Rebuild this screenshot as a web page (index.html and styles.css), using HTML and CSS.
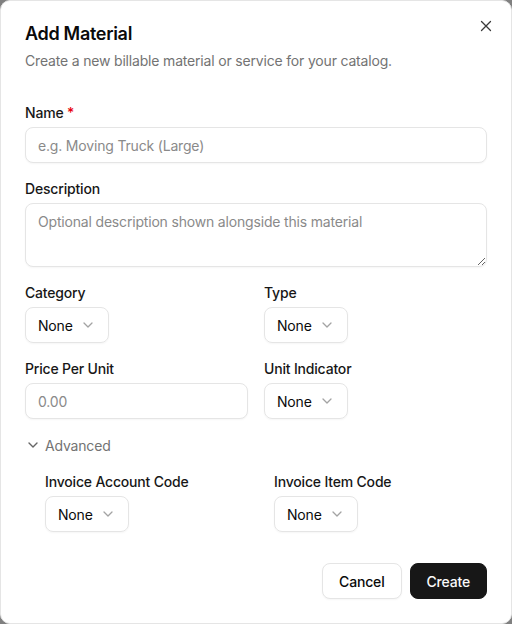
FILE: index.html
```html
<!DOCTYPE html>
<html lang="en">
<head>
<meta charset="utf-8">
<title>Add Material</title>
<link rel="stylesheet" href="styles.css">
</head>
<body>
<div class="dialog">
  <button class="close" aria-label="Close">
    <svg width="16" height="16" viewBox="0 0 16 16" fill="none" stroke="currentColor" stroke-width="1.3" stroke-linecap="round"><path d="M3.5 3.5L12.5 12.5M12.5 3.5L3.5 12.5"/></svg>
  </button>
  <div class="header">
    <h2 class="title">Add Material</h2>
    <p class="subtitle">Create a new billable material or service for your catalog.</p>
  </div>
  <form class="form">
    <div class="field">
      <label class="label">Name <span class="req">*</span></label>
      <input class="input" placeholder="e.g. Moving Truck (Large)">
    </div>
    <div class="field">
      <label class="label">Description</label>
      <textarea class="textarea" placeholder="Optional description shown alongside this material"></textarea>
    </div>
    <div class="row">
      <div class="field">
        <label class="label">Category</label>
        <div class="select"><span>None</span><svg class="chev" width="16" height="16" viewBox="0 0 16 16" fill="none" stroke="currentColor" stroke-width="1.3" stroke-linecap="round" stroke-linejoin="round"><path d="M4 6l4 4 4-4"/></svg></div>
      </div>
      <div class="field">
        <label class="label">Type</label>
        <div class="select"><span>None</span><svg class="chev" width="16" height="16" viewBox="0 0 16 16" fill="none" stroke="currentColor" stroke-width="1.3" stroke-linecap="round" stroke-linejoin="round"><path d="M4 6l4 4 4-4"/></svg></div>
      </div>
    </div>
    <div class="row">
      <div class="field">
        <label class="label">Price Per Unit</label>
        <input class="input" placeholder="0.00">
      </div>
      <div class="field">
        <label class="label">Unit Indicator</label>
        <div class="select"><span>None</span><svg class="chev" width="16" height="16" viewBox="0 0 16 16" fill="none" stroke="currentColor" stroke-width="1.3" stroke-linecap="round" stroke-linejoin="round"><path d="M4 6l4 4 4-4"/></svg></div>
      </div>
    </div>
    <div class="advanced">
      <svg class="adv-chev" width="16" height="16" viewBox="0 0 16 16" fill="none" stroke="currentColor" stroke-width="1.4" stroke-linecap="round" stroke-linejoin="round"><path d="M4 6l4 4 4-4"/></svg>
      <span>Advanced</span>
    </div>
    <div class="row adv-row">
      <div class="field">
        <label class="label">Invoice Account Code</label>
        <div class="select"><span>None</span><svg class="chev" width="16" height="16" viewBox="0 0 16 16" fill="none" stroke="currentColor" stroke-width="1.3" stroke-linecap="round" stroke-linejoin="round"><path d="M4 6l4 4 4-4"/></svg></div>
      </div>
      <div class="field">
        <label class="label">Invoice Item Code</label>
        <div class="select"><span>None</span><svg class="chev" width="16" height="16" viewBox="0 0 16 16" fill="none" stroke="currentColor" stroke-width="1.3" stroke-linecap="round" stroke-linejoin="round"><path d="M4 6l4 4 4-4"/></svg></div>
      </div>
    </div>
    <div class="footer">
      <button type="button" class="btn btn-outline">Cancel</button>
      <button type="button" class="btn btn-primary">Create</button>
    </div>
  </form>
</div>
</body>
</html>
```
FILE: styles.css
```css
* { box-sizing: border-box; }
html, body { margin: 0; padding: 0; }
body {
  background: #808080;
  font-family: "Inter", "Liberation Sans", sans-serif;
  color: #0a0a0a;
  width: 512px;
  height: 624px;
  overflow: hidden;
  letter-spacing: -0.18px;
}
.dialog {
  position: relative;
  width: 512px;
  height: 624px;
  background: #ffffff;
  border: 1px solid #e5e5e5;
  border-radius: 10px;
  padding: 24px;
}
.close {
  position: absolute;
  top: 17px;
  right: 17px;
  width: 16px;
  height: 16px;
  padding: 0;
  border: none;
  background: none;
  color: #3a3a3a;
  display: flex;
}
.header { display: flex; flex-direction: column; gap: 8px; }
.title {
  margin: 0;
  font-size: 18px;
  line-height: 18px;
  font-weight: 600;
  letter-spacing: -0.3px;
}
.subtitle {
  margin: 0;
  font-size: 14px;
  line-height: 20px;
  color: #737373;
}
.form {
  margin-top: 35px;
  display: flex;
  flex-direction: column;
  gap: 19px;
}
.field { display: flex; flex-direction: column; gap: 7px; }
.label {
  font-size: 14px;
  line-height: 14px;
  font-weight: 500;
  color: #171717;
}
.req { color: #e7000b; }
.input, .textarea {
  font-family: inherit;
  font-size: 14px;
  letter-spacing: -0.18px;
  color: #0a0a0a;
  border: 1px solid #e5e5e5;
  border-radius: 8px;
  padding: 0 12px;
  height: 36px;
  width: 100%;
  box-shadow: 0 1px 2px rgba(0,0,0,0.04);
  outline: none;
  background: #fff;
}
.textarea {
  height: 64px;
  padding: 8px 12px;
  line-height: 20px;
  resize: vertical;
  display: block;
}
.input::placeholder, .textarea::placeholder { color: #8a8a8a; }
.row {
  display: grid;
  grid-template-columns: 1fr 1fr;
  column-gap: 16px;
}
.select {
  align-self: flex-start;
  display: flex;
  align-items: center;
  gap: 7px;
  height: 36px;
  padding: 0 12px;
  border: 1px solid #e5e5e5;
  border-radius: 8px;
  font-size: 14px;
  box-shadow: 0 1px 2px rgba(0,0,0,0.04);
}
.chev { color: #a3a3a3; }
.advanced {
  display: flex;
  align-items: center;
  gap: 4px;
  height: 14px;
  font-size: 14px;
  color: #737373;
}
.adv-chev { color: #666; }
.adv-row { margin-top: 4px; padding-left: 20px; }
.footer {
  margin-top: 12px;
  display: flex;
  justify-content: flex-end;
  gap: 8px;
}
.btn {
  font-family: inherit;
  font-size: 14px;
  font-weight: 500;
  letter-spacing: -0.18px;
  height: 36px;
  padding: 0 16px;
  border-radius: 8px;
  cursor: pointer;
}
.btn-outline {
  background: #fff;
  border: 1px solid #e5e5e5;
  color: #0a0a0a;
  box-shadow: 0 1px 2px rgba(0,0,0,0.04);
}
.btn-primary {
  background: #171717;
  border: 1px solid #171717;
  color: #fafafa;
}
```
